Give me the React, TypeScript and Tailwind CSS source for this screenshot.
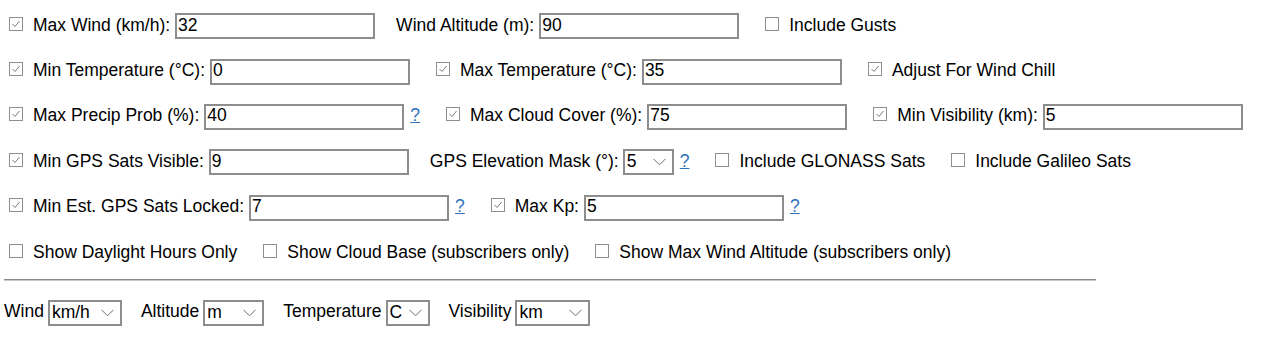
import React from "react";

function Check({ checked }: { checked?: boolean }) {
  return (
    <svg width="14" height="14" viewBox="0 0 14 14" className="ml-[5px] mr-[10px] mb-[5px] shrink-0">
      <rect x="0.5" y="0.5" width="13" height="13" fill="#fff" stroke="#8f8f8f" />
      {checked && <polyline points="3.5,7 6,9.5 10.5,4" fill="none" stroke="#7a7a7a" strokeWidth="1" />}
    </svg>
  );
}

function Txt({ children }: { children: React.ReactNode }) {
  return <span className="whitespace-nowrap mb-[3px]">{children}</span>;
}

function Input({ value }: { value: string }) {
  return (
    <div className="ml-[5px] w-[200px] h-[26px] border-2 border-[#8d8d8d] bg-white flex items-center pl-[1px] shrink-0">
      <span className="mb-[3px]">{value}</span>
    </div>
  );
}

function Select({ value, w }: { value: string; w: string }) {
  return (
    <div className={`ml-[4px] h-[26px] border-2 border-[#8d8d8d] bg-white flex items-center justify-between pl-[2px] pr-[6px] shrink-0 ${w}`}>
      <span className="mb-[2px]">{value}</span>
      <svg width="13" height="8" viewBox="0 0 13 8" className="shrink-0">
        <polyline points="0.5,0.8 6.5,6.8 12.5,0.8" fill="none" stroke="#6f6f6f" strokeWidth="1" />
      </svg>
    </div>
  );
}

function Help() {
  return <span className="ml-[6px] mb-[3px] text-[#2e6fba] underline">?</span>;
}

function G({ children }: { children: React.ReactNode }) {
  return <div className="flex items-center mr-[21px] shrink-0">{children}</div>;
}

function Row({ children }: { children: React.ReactNode }) {
  return <div className="flex items-center h-[45.4px]">{children}</div>;
}

export default function App() {
  return (
    <div
      className="bg-white text-black pl-[4px] pt-[3.5px] w-[1262px] h-[339px] overflow-hidden text-[17.5px]"
      style={{ fontFamily: '"Liberation Sans", Arial, sans-serif' }}
    >
      <Row>
        <G><Check checked /><Txt>Max Wind (km/h):</Txt><Input value="32" /></G>
        <G><Txt>Wind Altitude (m):</Txt><Input value="90" /></G>
        <G><Check /><Txt>Include Gusts</Txt></G>
      </Row>
      <Row>
        <G><Check checked /><Txt>Min Temperature (°C):</Txt><Input value="0" /></G>
        <G><Check checked /><Txt>Max Temperature (°C):</Txt><Input value="35" /></G>
        <G><Check checked /><Txt>Adjust For Wind Chill</Txt></G>
      </Row>
      <Row>
        <G><Check checked /><Txt>Max Precip Prob (%):</Txt><Input value="40" /><Help /></G>
        <G><Check checked /><Txt>Max Cloud Cover (%):</Txt><Input value="75" /></G>
        <G><Check checked /><Txt>Min Visibility (km):</Txt><Input value="5" /></G>
      </Row>
      <Row>
        <G><Check checked /><Txt>Min GPS Sats Visible:</Txt><Input value="9" /></G>
        <G><Txt>GPS Elevation Mask (°):</Txt><Select value="5" w="w-[51px]" /><Help /></G>
        <G><Check /><Txt>Include GLONASS Sats</Txt></G>
        <G><Check /><Txt>Include Galileo Sats</Txt></G>
      </Row>
      <Row>
        <G><Check checked /><Txt>Min Est. GPS Sats Locked:</Txt><Input value="7" /><Help /></G>
        <G><Check checked /><Txt>Max Kp:</Txt><Input value="5" /><Help /></G>
      </Row>
      <Row>
        <G><Check /><Txt>Show Daylight Hours Only</Txt></G>
        <G><Check /><Txt>Show Cloud Base (subscribers only)</Txt></G>
        <G><Check /><Txt>Show Max Wind Altitude (subscribers only)</Txt></G>
      </Row>
      <div className="mt-[3px] w-[1092px] border-t border-t-[#8a8a8a] border-b border-b-[#c8c8c8]" />
      <div className="mt-[19px] flex items-center h-[26px]">
        <div className="flex items-center mr-[19px]"><Txt>Wind</Txt><Select value="km/h" w="w-[74px]" /></div>
        <div className="flex items-center mr-[19px]"><Txt>Altitude</Txt><Select value="m" w="w-[61px]" /></div>
        <div className="flex items-center mr-[19px]"><Txt>Temperature</Txt><Select value="C" w="w-[44px]" /></div>
        <div className="flex items-center"><Txt>Visibility</Txt><Select value="km" w="w-[75px]" /></div>
      </div>
    </div>
  );
}
